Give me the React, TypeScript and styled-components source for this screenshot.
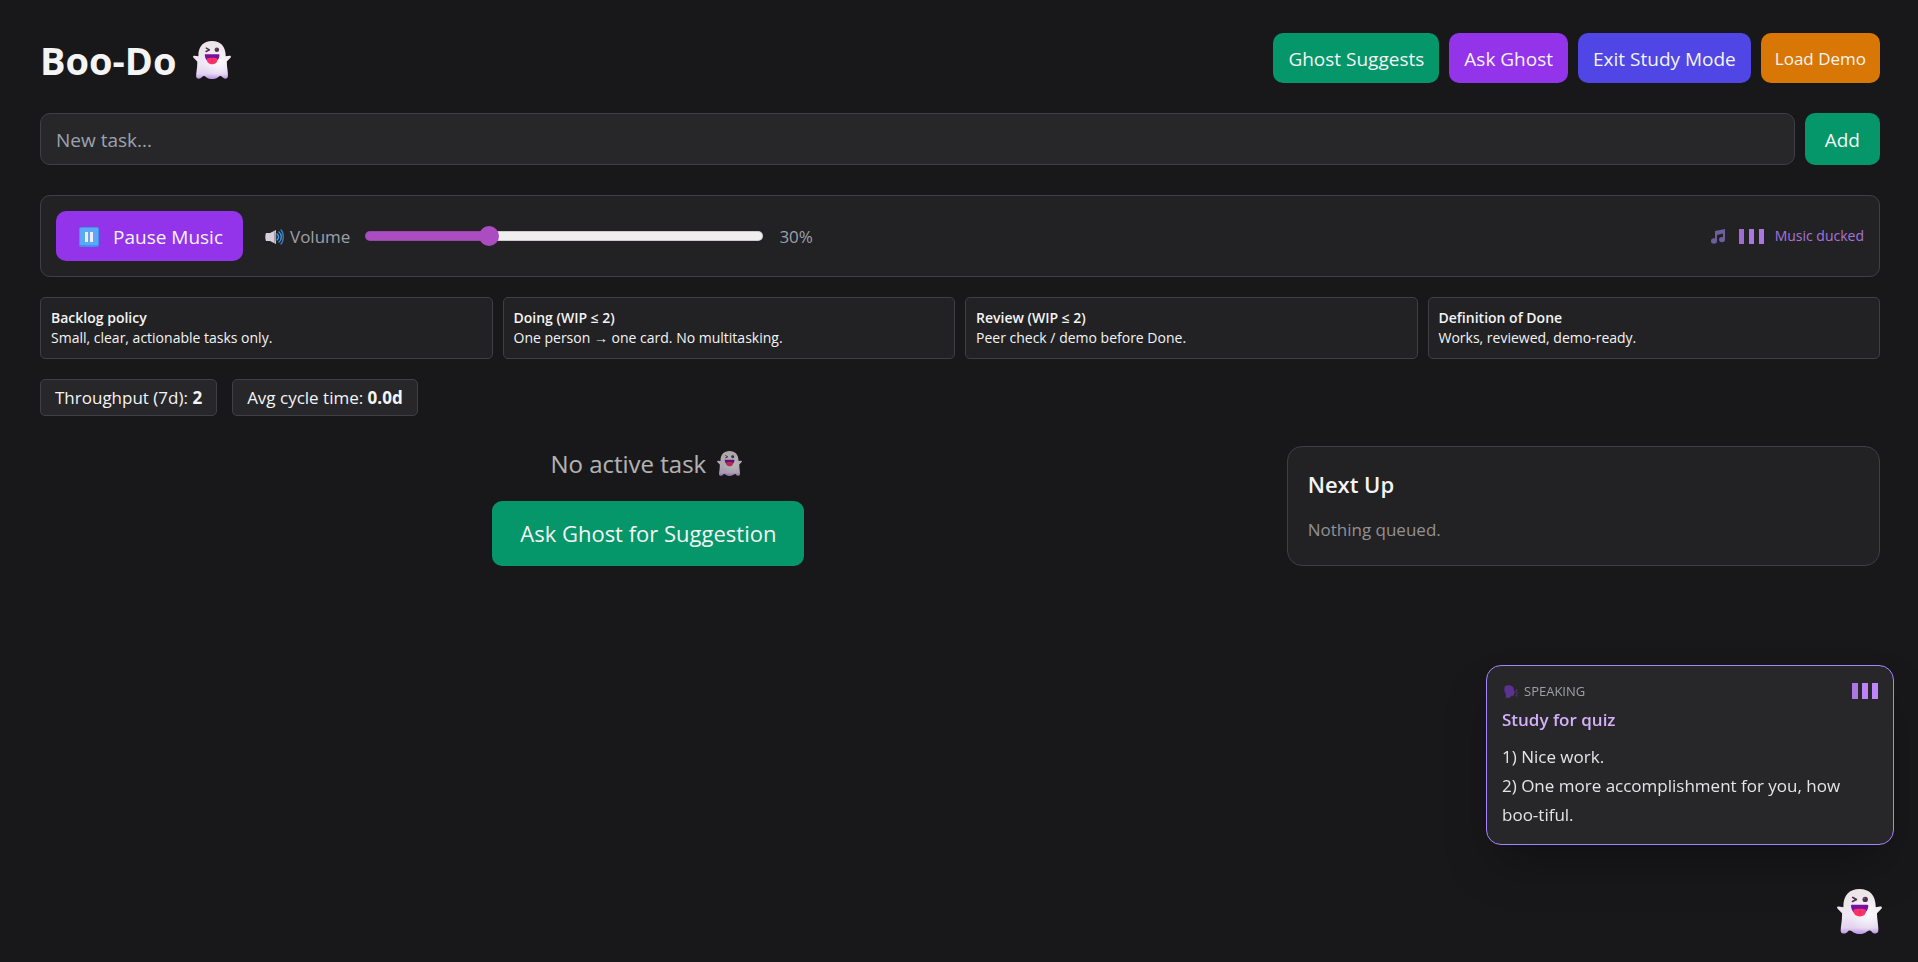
import React, { useState } from "react";
import styled, { createGlobalStyle, css } from "styled-components";

const color = {
  page: "#18181b",
  panel: "#222224",
  raised: "#27272a",
  line: "#3f3f46",
  text: "#f4f4f5",
  muted: "#9f9fa9",
  green: "#059669",
  purple: "#9333ea",
  indigo: "#4f46e5",
  amber: "#d97706",
};

const GlobalStyle = createGlobalStyle`
  *, *::before, *::after { box-sizing: border-box; }
  body {
    margin: 0;
    background: ${color.page};
    color: ${color.text};
    font: 400 19px/30px "Segoe UI", "Open Sans", "Noto Sans", sans-serif;
  }
  h1, h2, h3, p { margin: 0; }
  button, input { font: inherit; color: inherit; }
`;

const Page = styled.main`
  display: flex;
  flex-direction: column;
  min-height: 100vh;
  padding: 33px 38px 30px 40px;
`;

const Header = styled.header`
  display: flex;
  align-items: center;
  justify-content: space-between;
  margin-bottom: 30px;
`;

const Title = styled.h1`
  display: flex;
  align-items: center;
  gap: 17px;
  padding-top: 4px;
  font-size: 38px;
  line-height: 44px;
  font-weight: 700;
`;

const Actions = styled.div`
  display: flex;
  gap: 10px;
`;

const Button = styled.button<{ $bg: string; $size?: "small" | "wide" | "large" }>`
  display: inline-flex;
  align-items: center;
  justify-content: center;
  gap: 14px;
  border: 0;
  border-radius: 10px;
  padding: 11px 15px 9px;
  background: ${(p) => p.$bg};
  white-space: nowrap;
  cursor: pointer;
  ${(p) => p.$size === "small" && css`padding: 11px 14px 9px; font-size: 17px;`}
  ${(p) => p.$size === "wide" && css`padding: 11px 20px 9px;`}
  ${(p) => p.$size === "large" && css`padding: 15px 28px; font-size: 22px; line-height: 35px;`}
`;

const TaskForm = styled.form`
  display: flex;
  gap: 10px;
  margin-bottom: 30px;
`;

const TaskInput = styled.input`
  flex: 1;
  min-width: 0;
  padding: 11px 15px 9px;
  border: 1px solid ${color.line};
  border-radius: 10px;
  background: ${color.raised};
  outline: none;
  &::placeholder { color: #9ca3af; opacity: 1; }
`;

const MusicPanel = styled.section`
  display: flex;
  align-items: center;
  margin-bottom: 20px;
  padding: 15px;
  border: 1px solid ${color.line};
  border-radius: 10px;
  background: ${color.panel};
`;

const VolumeLabel = styled.label`
  display: flex;
  align-items: center;
  gap: 6px;
  margin: 0 15px 0 22px;
  padding-top: 2px;
  font-size: 17px;
  color: ${color.muted};
`;

const Slider = styled.input<{ $value: number }>`
  appearance: none;
  width: 398px;
  height: 20px;
  margin: 0 16px 0 0;
  background: transparent;
  cursor: pointer;
  &::-webkit-slider-runnable-track {
    height: 10px;
    border-radius: 5px;
    background: linear-gradient(to right, #ab4dc0 ${(p) => p.$value}%, #efefef ${(p) => p.$value}%);
    box-shadow: inset 0 0 0 1px rgba(80, 40, 90, 0.2);
  }
  &::-webkit-slider-thumb {
    appearance: none;
    width: 20px;
    height: 20px;
    margin-top: -5px;
    border-radius: 50%;
    background: #ab4dc0;
  }
`;

const Percent = styled.output`
  padding-top: 2px;
  font-size: 17px;
  color: ${color.muted};
`;

const MusicStatus = styled.div`
  display: flex;
  align-items: center;
  margin-left: auto;
  gap: 14px;
  font-size: 14px;
  line-height: 20px;
  color: #a873dd;
`;

const StatusBars = styled.span`
  display: flex;
  align-items: center;
  gap: 11px;
`;

const BarRow = styled.span`
  display: flex;
  gap: 5px;
`;

const Bar = styled.i<{ $fill: string }>`
  width: 5px;
  height: 15px;
  background: ${(p) => p.$fill};
`;

const Policies = styled.section`
  display: grid;
  grid-template-columns: repeat(4, minmax(0, 1fr));
  gap: 10px;
  margin-bottom: 20px;
`;

const Policy = styled.article`
  padding: 10px;
  border: 1px solid ${color.line};
  border-radius: 5px;
  background: ${color.panel};
  font-size: 14px;
  line-height: 20px;
`;

const PolicyTitle = styled.h3`
  font-size: 14px;
  line-height: 20px;
  font-weight: 600;
`;

const Stats = styled.section`
  display: flex;
  gap: 15px;
  margin-bottom: 30px;
`;

const Stat = styled.div`
  padding: 5px 14px;
  border: 1px solid ${color.line};
  border-radius: 5px;
  background: ${color.raised};
  font-size: 17px;
  line-height: 25px;
`;

const Board = styled.div`
  display: grid;
  grid-template-columns: repeat(3, minmax(0, 1fr));
  gap: 30px;
`;

const Focus = styled.section`
  grid-column: span 2;
  display: flex;
  flex-direction: column;
  align-items: center;
  gap: 20px;
`;

const EmptyText = styled.p`
  display: flex;
  align-items: center;
  gap: 11px;
  padding-right: 4px;
  font-size: 24px;
  line-height: 35px;
  opacity: 0.7;
`;

const NextUp = styled.aside`
  padding: 20px;
  border: 1px solid ${color.line};
  border-radius: 15px;
  background: ${color.panel};
`;

const NextTitle = styled.h2`
  margin-bottom: 13px;
  font-size: 22px;
  line-height: 35px;
  font-weight: 600;
`;

const Queued = styled.p`
  font-size: 17px;
  color: #919193;
`;

const Speech = styled.aside`
  position: fixed;
  right: 24px;
  bottom: 117px;
  width: 408px;
  padding: 15px;
  border: 1px solid #a684ff;
  border-radius: 15px;
  background: ${color.raised};
  box-shadow: 0 25px 50px -12px rgba(0, 0, 0, 0.35);
`;

const SpeechTop = styled.div`
  display: flex;
  align-items: center;
  gap: 6px;
  margin-bottom: 5px;
  padding-left: 1px;
  font-size: 13px;
  line-height: 20px;
  color: ${color.muted};
  ${BarRow} { margin-left: auto; gap: 4px; }
  ${Bar} { width: 6px; height: 16px; }
`;

const SpeechTitle = styled.h3`
  margin-bottom: 8px;
  font-size: 17px;
  line-height: 28px;
  font-weight: 600;
  color: #d4b0fb;
`;

const SpeechText = styled.p`
  font-size: 17px;
  line-height: 29px;
  color: #e4e4e7;
`;

const GhostButton = styled.button`
  position: fixed;
  right: 36px;
  bottom: 28px;
  display: flex;
  padding: 0;
  border: 0;
  background: none;
  cursor: pointer;
`;

function Ghost({ size, id }: { size: number; id: string }) {
  return (
    <svg width={size} height={size} viewBox="0 0 134 134" aria-hidden="true">
      <defs>
        <linearGradient id={id} x1="0" y1="0" x2="0" y2="1">
          <stop offset="0" stopColor="#eee4e6" />
          <stop offset="0.6" stopColor="#eee8f5" />
          <stop offset="0.86" stopColor="#e2d3f0" />
          <stop offset="1" stopColor="#bd91e4" />
        </linearGradient>
        <radialGradient id={`${id}-glow`} cx="0.68" cy="0.55" r="0.42">
          <stop offset="0" stopColor="#fff" stopOpacity="0.75" />
          <stop offset="1" stopColor="#fff" stopOpacity="0" />
        </radialGradient>
      </defs>
      {[`url(#${id})`, `url(#${id}-glow)`].map((fill) => (
        <path
          key={fill}
          fill={fill}
          d="M19 54C18 20 36 0 67 0s49 20 48 54l14-2c5 0 6 4 3 7l-13 13c0 20 5 38 4 51 0 11-12 13-19 5-6-7-11-5-17 1-9 7-30 7-39 0-6-6-11-8-17-1-7 8-21 6-20-5 0-13 5-31 4-51L2 59c-3-3-2-7 3-7z"
        />
      ))}
      <path d="M47 25l11 6-12 6" fill="none" stroke="#4b304e" strokeWidth="5" strokeLinecap="round" strokeLinejoin="round" />
      <circle cx="84" cy="31" r="8" fill="#4b304e" />
      <circle cx="81" cy="28" r="2" fill="#8c7690" />
      <path fill="#7a10a0" d="M44 47h46c3 0 4 2 3 6-2 14-12 23-26 23S44 67 42 53c-1-4 0-6 2-6z" />
      <path fill="#fa3468" d="M49 62c8-4 29-4 37 0v3c0 11-7 17-18 17s-19-6-19-17z" />
      <path d="M68 64v10" stroke="#d81b55" strokeWidth="2" />
    </svg>
  );
}

const PauseIcon = () => (
  <svg width="23" height="20" viewBox="-3 0 23 20" aria-hidden="true">
    <rect width="20" height="20" rx="2" fill="#3e93e6" />
    <rect x="1" y="1" width="18" height="17" rx="1" fill="#5aa8f8" />
    <path d="M6 5h3v10H6zM11 5h3v10h-3z" fill="#f3edfb" />
  </svg>
);

const SpeakerIcon = () => (
  <svg width="19" height="16" viewBox="0 0 19 16" aria-hidden="true">
    <path d="M1 4h4l6-3v14l-6-3H1C0 9 0 7 1 4z" fill="#d4cfda" />
    <path d="M9 2c3 1 3 11 0 12z" fill="#a49dac" />
    <path d="M12 5c2 1 2 5 0 6M14 3c3 2 3 8 0 10" fill="none" stroke="#3d9ce8" strokeWidth="1.4" strokeLinecap="round" />
    <path d="M16 1c3 3 3 11 0 14" fill="none" stroke="#3a86cc" strokeWidth="1.2" strokeLinecap="round" />
  </svg>
);

const NoteIcon = () => (
  <svg width="14" height="15" viewBox="0 0 14 15" aria-hidden="true">
    <path d="M4 2l10-2v4L6 6v6H4z" fill="#6b5f9c" />
    <path d="M12 2h2v9h-2z" fill="#6b5f9c" />
    <ellipse cx="3" cy="12" rx="3" ry="2.7" fill="#6b5f9c" />
    <ellipse cx="11" cy="10.6" rx="3" ry="2.7" fill="#6b5f9c" />
  </svg>
);

const HeadIcon = () => (
  <svg width="15" height="13" viewBox="0 0 15 13" aria-hidden="true">
    <path d="M2 1c3-1.500 6-1 8 1 1 1 .6 2.500 1 3.500l1 2-1 .7v1.500c0 1-1 1.300-2.500 1L7 12.500c-2 .5-3 .5-4.500 0 .5-1.500.5-2.500 0-4C1 6.500 1 3 2 1z" fill="#5b3192" />
    <path d="M13 6l1-1M13 8h1.500M13 10l1 1" stroke="#4d3578" strokeWidth="1.200" strokeLinecap="round" />
  </svg>
);

const policies = [
  ["Backlog policy", "Small, clear, actionable tasks only."],
  ["Doing (WIP ≤ 2)", "One person → one card. No multitasking."],
  ["Review (WIP ≤ 2)", "Peer check / demo before Done."],
  ["Definition of Done", "Works, reviewed, demo-ready."],
];

export default function App() {
  const [volume, setVolume] = useState(30);
  const [task, setTask] = useState("");

  return (
    <>
      <GlobalStyle />
      <Page>
        <Header>
          <Title>
            Boo-Do <Ghost size={38} id="ghost-title" />
          </Title>
          <Actions>
            <Button type="button" $bg={color.green}>Ghost Suggests</Button>
            <Button type="button" $bg={color.purple}>Ask Ghost</Button>
            <Button type="button" $bg={color.indigo}>Exit Study Mode</Button>
            <Button type="button" $bg={color.amber} $size="small">Load Demo</Button>
          </Actions>
        </Header>

        <TaskForm onSubmit={(e) => { e.preventDefault(); setTask(""); }}>
          <TaskInput
            aria-label="New task"
            placeholder="New task..."
            value={task}
            onChange={(e) => setTask(e.target.value)}
          />
          <Button type="submit" $bg={color.green} $size="wide">Add</Button>
        </TaskForm>

        <MusicPanel>
          <Button type="button" $bg={color.purple} $size="wide"><PauseIcon />Pause Music</Button>
          <VolumeLabel htmlFor="volume"><SpeakerIcon />Volume</VolumeLabel>
          <Slider
            id="volume"
            type="range"
            min={0}
            max={100}
            value={volume}
            $value={volume}
            onChange={(e) => setVolume(Number(e.target.value))}
          />
          <Percent htmlFor="volume">{volume}%</Percent>
          <MusicStatus>
            <NoteIcon />
            <StatusBars>
              <BarRow>
                <Bar $fill="#9f6cd1" />
                <Bar $fill="#ab76e2" />
                <Bar $fill="#ab76e2" />
              </BarRow>
              Music ducked
            </StatusBars>
          </MusicStatus>
        </MusicPanel>

        <Policies>
          {policies.map(([title, text]) => (
            <Policy key={title}>
              <PolicyTitle>{title}</PolicyTitle>
              <p>{text}</p>
            </Policy>
          ))}
        </Policies>

        <Stats>
          <Stat>Throughput (7d): <b>2</b></Stat>
          <Stat>Avg cycle time: <b>0.0d</b></Stat>
        </Stats>

        <Board>
          <Focus>
            <EmptyText>No active task <Ghost size={25} id="ghost-empty" /></EmptyText>
            <Button type="button" $bg={color.green} $size="large">Ask Ghost for Suggestion</Button>
          </Focus>
          <NextUp>
            <NextTitle>Next Up</NextTitle>
            <Queued>Nothing queued.</Queued>
          </NextUp>
        </Board>
      </Page>

      <Speech>
        <SpeechTop>
          <HeadIcon />
          SPEAKING
          <BarRow>
            <Bar $fill="#ac77e2" />
            <Bar $fill="#bd81fa" />
            <Bar $fill="#c084fc" />
          </BarRow>
        </SpeechTop>
        <SpeechTitle>Study for quiz</SpeechTitle>
        <SpeechText>
          1) Nice work.
          <br />
          2) One more accomplishment for you, how boo-tiful.
        </SpeechText>
      </Speech>
      <GhostButton type="button" aria-label="Ghost">
        <Ghost size={45} id="ghost-float" />
      </GhostButton>
    </>
  );
}
